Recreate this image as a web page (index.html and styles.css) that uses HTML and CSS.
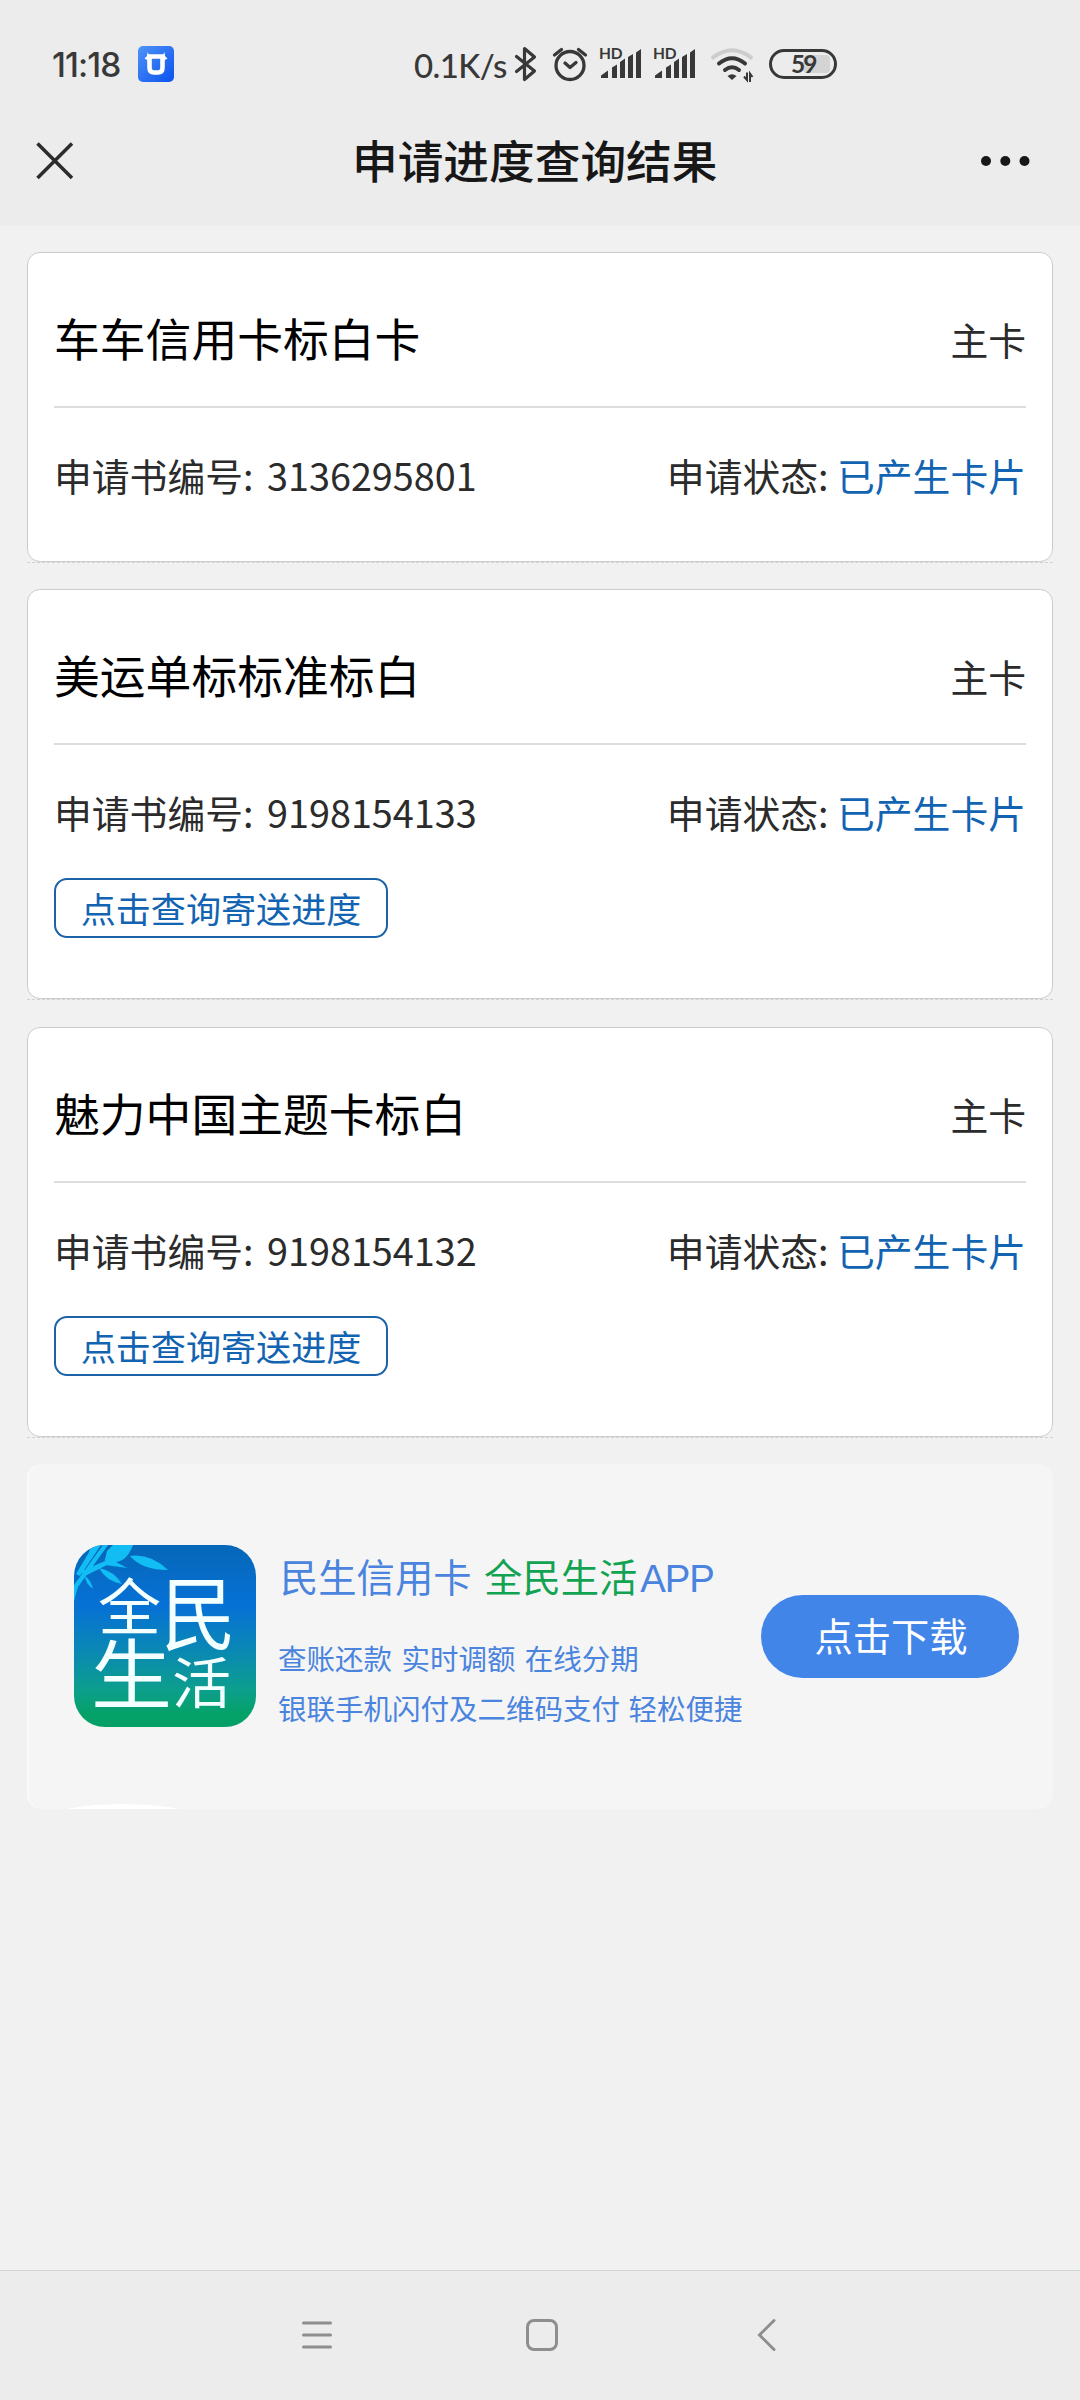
FILE: index.html
```html
<!DOCTYPE html>
<html lang="zh-CN">
<head>
<meta charset="utf-8">
<title>申请进度查询结果</title>
<link rel="stylesheet" href="styles.css">
</head>
<body>
<div class="screen">
  <header class="top">
    <div class="status">
      <span class="clock">11:18</span>
      <svg class="notice" viewBox="0 0 36 36">
        <defs><linearGradient id="blue" x1="0" y1="0" x2="1" y2="1"><stop offset="0" stop-color="#4f93f8"/><stop offset="1" stop-color="#0a52ee"/></linearGradient></defs>
        <rect width="36" height="36" rx="5" fill="url(#blue)"/>
        <path d="M13.500 10.500h9q2 0 2 2v9q0 5-4.500 5h-4q-4.500 0-4.500-5v-9q0-2 2-2z" fill="none" stroke="#fff" stroke-width="4.600"/>
        <path d="M9.500 5.500q0 3 3 3l-1.500 6.500-4.500-2.500 2.500-2.500zM26.500 5.500q0 3-3 3l1.500 6.500 4.500-2.500-2.500-2.500z" fill="#fff"/>
      </svg>
      <span class="speed">0.1K/s</span>
      <svg class="signals" viewBox="512 40 330 48" fill="none" stroke="#383838">
        <path d="M516.500 56.500l18 14.500-10 8.500V48.500l10 8.500-18 14.500" stroke-width="3.200" stroke-linejoin="round" stroke-linecap="round"/>
        <g stroke-width="3.300" stroke-linecap="round" stroke-linejoin="round">
          <circle cx="570" cy="65.500" r="14"/>
          <path d="M565 63l5 4.500 6-5M554.500 55l7-5.500M585.500 55l-7-5.500"/>
        </g>
        <g id="bars" stroke="none" fill="#383838">
          <path d="M601 78v-2.500l7-5V78zM612 78V67.500l5-3V78zM620 78V62l5-3.500V78zM628 78V57l5-3V78zM636 78V52.500l5-3.500V78z"/>
          <text class="hd" x="599" y="59">HD</text>
        </g>
        <use href="#bars" x="54"/>
        <g stroke-linecap="round">
          <path d="M713 57.500q19-14.500 38 0" stroke="#cdcdcd" stroke-width="4"/>
          <path d="M719 63.500q13-10.500 26 0" stroke-width="4"/>
          <path d="M725 70q7-5.500 14 0" stroke-width="4"/>
        </g>
        <path d="M727.500 76q4.500-3.500 9 0l-4.500 4z" fill="#383838" stroke="none"/>
        <path d="M744 76.500l3 3.500V72.500M752.500 77l-2.500-3.500V82" stroke-width="2"/>
        <rect x="803" y="55" width="27" height="18" rx="4" fill="#d4d4d4" stroke="none"/>
        <rect x="770.500" y="50.500" width="65" height="27" rx="13.500" stroke-width="3"/>
        <text class="level" x="791" y="72.500">59</text>
      </svg>
    </div>
    <div class="navbar">
      <svg class="close" viewBox="0 0 38 38"><path d="M1.500 1.500l34.500 34.500M36 1.500L1.500 36"/></svg>
      <h1 class="heading">申请进度查询结果</h1>
      <svg class="more" viewBox="0 0 50 12"><circle cx="6" cy="6" r="5"/><circle cx="25.300" cy="6" r="5"/><circle cx="44.500" cy="6" r="5"/></svg>
    </div>
  </header>

  <main class="list">
    <div class="item">
      <section class="card">
        <div class="card-head"><h2 class="name">车车信用卡标白卡</h2><span class="kind">主卡</span></div>
        <div class="row"><span>申请书编号: <span class="number">3136295801</span></span><span>申请状态: <span class="state">已产生卡片</span></span></div>
      </section>
    </div>
    <div class="item">
      <section class="card card-tall">
        <div class="card-head"><h2 class="name">美运单标标准标白</h2><span class="kind">主卡</span></div>
        <div class="row"><span>申请书编号: <span class="number">9198154133</span></span><span>申请状态: <span class="state">已产生卡片</span></span></div>
        <button class="track">点击查询寄送进度</button>
      </section>
    </div>
    <div class="item">
      <section class="card card-tall">
        <div class="card-head"><h2 class="name">魅力中国主题卡标白</h2><span class="kind">主卡</span></div>
        <div class="row"><span>申请书编号: <span class="number">9198154132</span></span><span>申请状态: <span class="state">已产生卡片</span></span></div>
        <button class="track">点击查询寄送进度</button>
      </section>
    </div>

    <section class="banner">
      <svg class="logo" viewBox="0 0 182 182">
        <defs>
          <linearGradient id="sea" x1="0" y1="0" x2="0" y2="1"><stop offset="0" stop-color="#0667b8"/><stop offset=".33" stop-color="#0671d6"/><stop offset=".58" stop-color="#0a88b4"/><stop offset=".8" stop-color="#0c9f8c"/><stop offset=".93" stop-color="#04a168"/><stop offset="1" stop-color="#049f66"/></linearGradient>
          <clipPath id="tile"><rect width="182" height="182" rx="31"/></clipPath>
        </defs>
        <g clip-path="url(#tile)">
          <rect width="182" height="182" fill="url(#sea)"/>
          <g fill="#12bdf4">
            <path d="M56 11q20-3 38 14-26 0-38-14zM42 0h17q-6 16-17 17l11 6-22-3q3-12 11-20zM25 23q15 3 23 16-16-3-23-16zM11 31q6 4 8 13-8-6-8-13z"/>
            <path d="M14 9L18 0h9L8 28 6 31 2 29zM29 0h5L4 42 0 56V40zM8 26L31 16l2 4L9 32zM33 6l6-6h4l-9 18-4 1z"/>
          </g>
          <g class="logo-text">
            <text transform="translate(24 84.500) scale(1 .98)" font-size="63">全</text>
            <text transform="translate(87 99) scale(1 1.080)" font-size="75">民</text>
            <text transform="translate(17 157.500) scale(1 .940)" font-size="81">生</text>
            <text transform="translate(98 158) scale(1 .920)" font-size="59">活</text>
          </g>
        </g>
      </svg>
      <div class="pitch">
        <p class="pitch-title">民生信用卡 <em class="green">全民生活</em><span class="latin">APP</span></p>
        <p class="pitch-line short">查账还款 实时调额 在线分期</p>
        <p class="pitch-line">银联手机闪付及二维码支付 轻松便捷</p>
      </div>
      <button class="download">点击下载</button>
    </section>
  </main>

  <nav class="keys">
    <svg viewBox="0 0 36 36"><path d="M4.500 6h27M4.500 18h27M4.500 30h27"/></svg>
    <svg viewBox="0 0 36 36"><rect x="3.500" y="3.500" width="29" height="29" rx="6.500"/></svg>
    <svg viewBox="0 0 36 36"><path d="M25 3.500L10.500 18 25 32.500"/></svg>
  </nav>
</div>
</body>
</html>
```
FILE: styles.css
```css
* { box-sizing: border-box; }
body {
  margin: 0;
  background: #f1f1f1;
  font-family: "Noto Sans CJK SC", sans-serif;
  color: #2b2b2b;
}
h1, h2, p { margin: 0; font-weight: 400; }
button { font-family: inherit; margin: 0; white-space: nowrap; }
svg { display: block; flex: none; }

.screen { width: 1080px; height: 2400px; display: flex; flex-direction: column; }

.top { height: 226px; background: #ececec; flex: none; }
.status {
  height: 96px;
  padding: 41px 0 0 52px;
  display: flex;
  font-family: Inter, sans-serif;
  font-weight: 500;
  font-size: 33.500px;
  line-height: 48px;
  color: #383838;
}
.clock { width: 86px; letter-spacing: -.9px; white-space: nowrap; }
.notice { width: 36px; height: 36px; margin-top: 5px; }
.speed { width: 98px; margin-left: 240px; font-family: Lato, sans-serif; font-weight: 500; font-size: 33px; letter-spacing: -.6px; white-space: nowrap; }
.signals { width: 330px; height: 48px; margin-top: -1px; }
.hd { font: 700 15.500px Lato, sans-serif; letter-spacing: -.2px; }
.level { font: 700 24.500px Lato, sans-serif; fill: #383838; stroke: none; letter-spacing: -2px; }

.navbar {
  height: 130px;
  padding: 0 50px 0 36px;
  display: flex;
  align-items: flex-start;
}
.close { width: 38px; height: 38px; margin-top: 46px; fill: none; stroke: #2b2b2b; stroke-width: 3.500; }
.heading { font-size: 45.700px; line-height: 66px; font-weight: 500; color: #171717; margin: 30px 0 0 278px; white-space: nowrap; }
.more { width: 50px; height: 12px; margin: 59px 0 0 auto; fill: #171717; }

.list { flex: 1; padding: 26px 27px 0; display: flex; flex-direction: column; gap: 26.400px; }
.item { border-bottom: 1px dashed #d2d2d2; }
.card {
  height: 310px;
  padding: 0 26px;
  background: #fff;
  border: 1px solid #ccc;
  border-radius: 13px;
}
.card-tall { height: 410px; }
.card-head {
  height: 155px;
  padding-top: 50px;
  border-bottom: 2px solid #ddd;
  display: flex;
  justify-content: space-between;
}
.name { font-size: 45.800px; line-height: 68px; color: #000; }
.kind { font-size: 37.800px; line-height: 71px; }
.row {
  display: flex;
  justify-content: space-between;
  font-size: 37.800px;
  line-height: 56px;
  margin-top: 39px;
}
.number { margin-left: 5px; }
.state { color: #1264b2; }
.track {
  display: block;
  width: 334px;
  height: 60px;
  margin-top: 38px;
  padding: 0;
  border: 2px solid #1b62a8;
  border-radius: 13px;
  background: none;
  color: #1264b2;
  font-size: 35.100px;
  line-height: 56px;
}

.banner {
  height: 345px;
  padding: 81px 34px 0 47px;
  display: flex;
  border-radius: 14px;
  background: radial-gradient(ellipse 76px 14px at 96px 354px, #fff 96%, transparent) #f5f5f5;
  box-shadow: inset 2px 0 #fafafa;
}
.logo { width: 182px; height: 182px; }
.logo-text { fill: #f4ffff; font-weight: 400; }
.pitch { width: 483px; margin-left: 22px; color: #4a84de; white-space: nowrap; font-weight: 300; }
.pitch-title { font-size: 38.300px; line-height: 56px; margin: 3px 0 26px 2px; }
.green { font-style: normal; color: #12a352; margin-left: 4px; }
.latin { font-family: "Liberation Sans", sans-serif; letter-spacing: -1px; margin-left: 3px; }
.pitch-line { font-size: 28.500px; line-height: 49.500px; word-spacing: 2px; }
.short { word-spacing: 3px; }
.download {
  width: 258px;
  height: 83px;
  margin-top: 50px;
  padding: 0;
  border: 0;
  border-radius: 42px;
  background: #4285e9;
  color: #fff;
  font-size: 38.300px;
  font-weight: 400;
  line-height: 76px;
  padding: 0 0 3px 2px;
}

.keys {
  height: 130px;
  flex: none;
  border-top: 1px solid #d2d4d2;
  background: #ececec;
  padding: 46px 295px 0 299px;
  display: flex;
  justify-content: space-between;
}
.keys svg { width: 36px; height: 36px; fill: none; stroke: #8e8e8e; stroke-width: 3; stroke-linecap: round; }
```
